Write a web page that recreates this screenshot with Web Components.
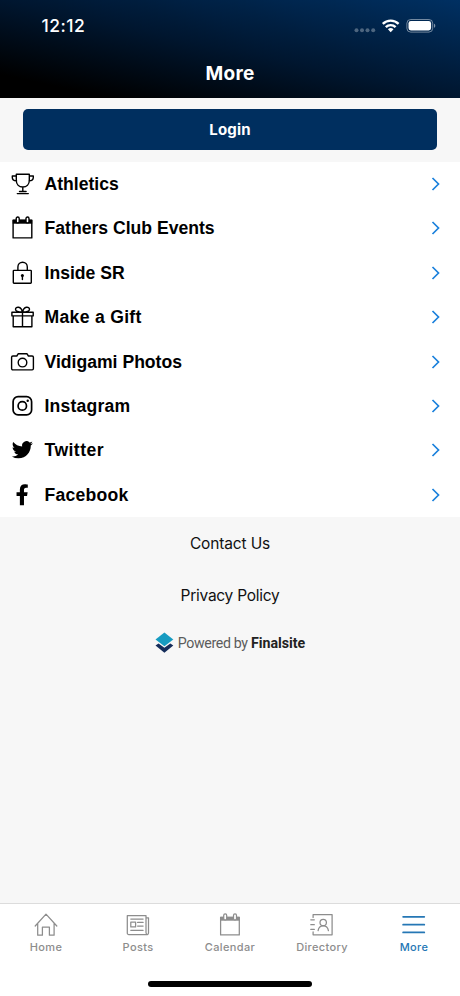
<!DOCTYPE html>
<html lang="en">
<head>
<meta charset="utf-8">
<title>More</title>
<style>
html,body{margin:0;height:100%}
body{font-family:Inter,"Liberation Sans",sans-serif;background:#f7f7f7;overflow:hidden}
</style>
</head>
<body>
<more-screen></more-screen>
<script>
const ICONS = {
  trophy:'<path d="M6 2.4h13v6.3c0 3.8-2.7 6.5-6.500 6.500S6 12.500 6 8.700zM6 4.200H2v1.500c0 2.300 1.700 3.200 4.200 3.300M19 4.200h4v1.500c0 2.300-1.700 3.200-4.200 3.300M12.500 15.200v4.500M9.200 19.700h6.600M7 21.800h11"/>',
  calendar:'<path d="M2.800 4.500h18.700v17.600H2.800z"/><path d="M2.400 4h19.500v3.900H2.400z" fill="currentColor" stroke="none"/><rect x="5.900" y="1.200" width="3" height="5.900" rx="1.500" fill="var(--paper)"/><rect x="15.700" y="1.200" width="3" height="5.900" rx="1.500" fill="var(--paper)"/>',
  lock:'<rect x="3" y="9.600" width="18" height="12.800" rx=".7"/><path d="M7.600 9.600V6.100a4.700 4.700 0 0 1 9.400 0v3.500"/><circle cx="12.100" cy="14.600" r="1.500" fill="currentColor" stroke="none"/><path d="M12.100 15v3.700"/>',
  gift:'<path d="M1.600 7.400h21.300v3.700H1.600zM2.900 11.100h18.700v10.900H2.900zM12.200 7.400V22M12 7.200C8.500 7.200 5.200 6.900 5.200 4.500c0-3 5.900-3.300 6.800 2.700zM12.400 7.200c3.500 0 6.800-.3 6.800-2.700 0-3-5.900-3.300-6.800 2.700z"/>',
  camera:'<path d="M2.600 6.200h3.900L8 3.900h8.600l1.500 2.300h3.700q1.300 0 1.300 1.300v11.300q0 1.300-1.300 1.300H2.600q-1.300 0-1.300-1.300V7.500q0-1.300 1.300-1.300z"/><circle cx="12.200" cy="12.800" r="4.300"/>',
  instagram:'<rect x="2.800" y="2.900" width="18.500" height="18.200" rx="5" stroke-width="1.700"/><circle cx="12" cy="12.100" r="4.200" stroke-width="1.700"/><circle cx="17.400" cy="6.900" r="1.200" fill="currentColor" stroke="none"/>',
  twitter:'<path transform="translate(1.500 1.400) scale(.88)" stroke="none" fill="currentColor" d="M23.953 4.570a10 10 0 0 1-2.825.775 4.958 4.958 0 0 0 2.163-2.723c-.951.555-2.005.959-3.127 1.184a4.920 4.920 0 0 0-8.384 4.482C7.690 8.095 4.067 6.130 1.640 3.162a4.822 4.822 0 0 0-.666 2.475c0 1.710.870 3.213 2.188 4.096a4.904 4.904 0 0 1-2.228-.616v.060a4.923 4.923 0 0 0 3.946 4.827 4.996 4.996 0 0 1-2.212.085 4.936 4.936 0 0 0 4.604 3.417 9.867 9.867 0 0 1-6.102 2.105c-.390 0-.779-.023-1.170-.067a13.995 13.995 0 0 0 7.557 2.209c9.053 0 13.998-7.496 13.998-13.985 0-.210 0-.420-.015-.630A9.935 9.935 0 0 0 24 4.590z"/>',
  facebook:'<path transform="translate(5.300 1.500) scale(.041)" stroke="none" fill="currentColor" d="M279.140 288l14.220-92.660h-88.910v-60.130c0-25.350 12.420-50.060 52.240-50.060h40.420V6.260S260.430 0 225.360 0c-73.220 0-121.080 44.380-121.080 124.720v70.620H22.890V288h81.390v224h100.170V288z"/>',
  home:'<path d="M1.400 13.200 12.200 1.300 23 13.200M3.900 10.600v11.800h4.700v-8.100h7v8.100h4.700V10.600"/>',
  posts:'<path d="M1.500 2.800h18.700v17c0 1.500.5 2 1.500 2H3.100c-1 0-1.600-.6-1.600-1.600zM20.200 5h2.500v15.300c0 1-.5 1.500-1.300 1.500M5 6.300h12.300M11.800 9.700h5.500M11.800 13.300h5.500M5 17.500h12.300"/><rect x="5" y="9.300" width="4.800" height="4.900"/>',
  directory:'<path d="M3.300 4.600V1.800h19V22h-19v-2.800M1 7h3.500M1 11.900h3.500M1 16.700h3.500"/><circle cx="13.400" cy="9.700" r="3.200"/><path d="M8.300 17.800c.5-3 2.300-4.700 5.100-4.700s4.700 1.700 5.200 4.700"/>',
  menu:'<path d="M1.300 4h21.200M1.300 11.900h21.200M1.300 19.600h21.200" stroke-width="1.700"/>'
};
function define(name, render) {
  customElements.define(name, class extends HTMLElement {
    connectedCallback() {
      if (this.shadowRoot) return;
      const t = document.createElement('template');
      t.innerHTML = render(this);
      this.attachShadow({mode:'open'}).append(t.content.cloneNode(true));
    }
  });
}
define('app-icon', el => `<style>
:host{display:block;width:24px;height:24px}
svg{display:block;overflow:visible}
</style><svg width="24" height="24" viewBox="0 0 24 24" fill="none" stroke="currentColor" stroke-width="${el.getAttribute('weight') || 1.4}" stroke-linejoin="round" stroke-linecap="round"><g transform="translate(${el.getAttribute('weight') ? -.2 : -.7} -.2)">${ICONS[el.getAttribute('name')]}</g></svg>`);
define('status-bar', () => `<style>
:host{display:flex;justify-content:space-between;align-items:center;height:52px;padding:0 24.500px 0 41.500px;box-sizing:border-box}
span{font-size:17.500px;font-weight:500;line-height:20px;letter-spacing:.5px}
svg{display:block}
</style><span>12:12</span>
<svg width="82" height="16" viewBox="354 17.500 82 16" fill="#fff">
<g opacity=".3"><circle cx="356.500" cy="29.800" r="2"/><circle cx="362" cy="29.800" r="2"/><circle cx="367.500" cy="29.800" r="2"/><circle cx="373.200" cy="29.800" r="2"/></g>
<g fill="none" stroke="#fff" stroke-width="2.400"><path d="M382.800 23.400a11.200 11.200 0 0 1 15.800 0M385.800 26.600a7 7 0 0 1 9.800 0"/></g>
<path d="M387.900 28.800a4 4 0 0 1 5.600 0l-2.800 2.900z"/>
<rect x="406.900" y="19" width="25.800" height="12.600" rx="3.800" fill="none" stroke="#fff" stroke-opacity=".45"/>
<rect x="408.500" y="20.600" width="22.600" height="9.400" rx="2.400"/>
<path d="M434 23.300c1.700.5 1.700 3.500 0 4z" opacity=".5"/></svg>`);
define('app-header', () => `<style>
:host{display:flex;flex-direction:column;height:98px;color:#fff;background:linear-gradient(to top right,#000 12%,#00162f 50%,#003062 100%)}
h1{margin:0;font-size:19px;font-weight:650;line-height:24px;padding-top:9.500px;text-align:center;letter-spacing:.3px}
</style><status-bar></status-bar><h1><slot></slot></h1>`);
define('login-button', () => `<style>
:host{display:block;padding:11px 23px;height:63.900px;box-sizing:border-box}
button{display:block;width:100%;height:41px;border:0;border-radius:5px;background:#002f5f;color:#fff;font:650 15px Inter,sans-serif;letter-spacing:.2px;padding:0}
</style><button><slot></slot></button>`);
define('menu-row', el => `<style>
:host{display:flex;align-items:center;height:44.400px;padding:0 19.500px 0 10.500px;--paper:#fff}
span{flex:1;padding-left:10px;font:bold 17.600px/22px "Liberation Sans",sans-serif;letter-spacing:${el.getAttribute('ls') || 0}px;white-space:nowrap}
svg{display:block}
</style><app-icon name="${el.getAttribute('icon')}"></app-icon><span><slot></slot></span>
<svg width="10" height="14" viewBox="0 0 10 14" fill="none" stroke="#1a80dc" stroke-width="1.700"><path d="M1.500 1 7.500 7l-6 6"/></svg>`);
define('menu-list', () => `<style>:host{display:block;background:#fff;color:#000;height:355px}</style><slot></slot>`);
define('footer-links', () => `<style>
:host{display:flex;flex-direction:column;align-items:center;color:#111;padding-top:1px}
::slotted(a){font-size:15.500px;line-height:20px;margin-top:16px;margin-bottom:16px;letter-spacing:-.15px}
::slotted(a:last-child){letter-spacing:-.27px}
</style><slot></slot>`);
define('powered-by', () => `<style>
:host{display:flex;align-items:center;justify-content:center;height:22px;margin-top:10.500px;color:#5c5c5c;font:14.200px/20px Roboto,sans-serif}
svg{display:block;margin-right:4px}
span{letter-spacing:-.34px;white-space:pre}
b{font-weight:700;color:#222;letter-spacing:0}
</style><svg width="19" height="22" viewBox="0 0 19 22"><path d="m.5 13.500 3-1.900 5.900 4.100 5.900-4.100 3 1.900-8.900 7.300z" fill="#152d5b"/><path d="m9.400.5 8.900 6.900-8.900 6.900L.5 7.400z" fill="#169bc1"/></svg><span>Powered by <b>Finalsite</b></span>`);
define('tab-item', el => `<style>
:host{display:flex;flex:1;flex-direction:column;align-items:center;padding-top:9px;color:#8d8d8d;--paper:#fff}
:host([active]){color:#2577b5}
span{font-size:11px;font-weight:500;line-height:14px;margin-top:3px;letter-spacing:.35px;white-space:nowrap;transform:translateY(-.5px)}
</style><app-icon name="${el.getAttribute('icon')}" weight="1.250"></app-icon><span><slot></slot></span>`);
define('tab-bar', () => `<style>
:host{display:flex;flex-direction:column;height:93px;box-sizing:border-box;border-top:1px solid #dcdcdc;background:#fff}
nav{display:flex;flex:1}
i{display:block;width:164px;height:5.500px;border-radius:3px;background:#000;margin:0 auto 9.500px}
</style><nav><slot></slot></nav><i></i>`);
define('more-screen', () => `<style>
:host{display:flex;flex-direction:column;width:460px;height:996px;background:#f7f7f7}
main{flex:1}
</style>
<app-header>More</app-header>
<main>
<login-button>Login</login-button>
<menu-list>
<menu-row icon="trophy">Athletics</menu-row>
<menu-row icon="calendar">Fathers Club Events</menu-row>
<menu-row icon="lock">Inside SR</menu-row>
<menu-row icon="gift" ls=".3">Make a Gift</menu-row>
<menu-row icon="camera">Vidigami Photos</menu-row>
<menu-row icon="instagram" ls=".18">Instagram</menu-row>
<menu-row icon="twitter" ls=".45">Twitter</menu-row>
<menu-row icon="facebook" ls=".22">Facebook</menu-row>
</menu-list>
<footer-links><a>Contact Us</a><a>Privacy Policy</a></footer-links>
<powered-by></powered-by>
</main>
<tab-bar>
<tab-item icon="home">Home</tab-item>
<tab-item icon="posts">Posts</tab-item>
<tab-item icon="calendar">Calendar</tab-item>
<tab-item icon="directory">Directory</tab-item>
<tab-item icon="menu" active>More</tab-item>
</tab-bar>`);
</script>
</body>
</html>
